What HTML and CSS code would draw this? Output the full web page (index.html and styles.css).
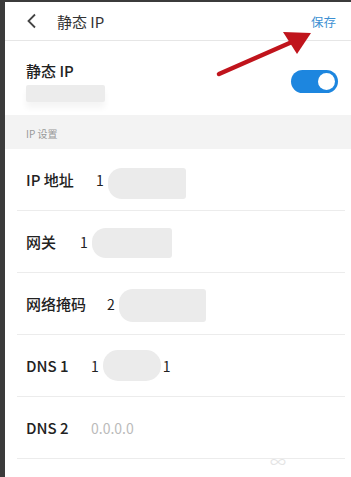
FILE: index.html
```html
<!DOCTYPE html>
<html lang="zh">
<head>
<meta charset="utf-8">
<link rel="stylesheet" href="styles.css">
</head>
<body>
<div class="screen">
  <header class="topbar">
    <svg class="back" width="12" height="16" viewBox="0 0 12 16"><path d="M9 1.5 L2.5 8 L9 14.5" fill="none" stroke="#444" stroke-width="1.8"/></svg>
    <span class="title">静态 IP</span>
    <span class="save">保存</span>
  </header>
  <section class="static-row">
    <div class="static-text">
      <div class="label">静态 IP</div>
      <div class="blur-sub"></div>
    </div>
    <div class="toggle"><div class="knob"></div></div>
  </section>
  <div class="section-head">IP 设置</div>
  <div class="row">
    <span class="label w-ip">IP 地址</span>
    <span class="value">1</span><span class="blob b-ip"></span>
  </div>
  <div class="row">
    <span class="label w-gw">网关</span>
    <span class="value">1</span><span class="blob b-gw"></span>
  </div>
  <div class="row">
    <span class="label w-mask">网络掩码</span>
    <span class="value">2</span><span class="blob b-mask"></span>
  </div>
  <div class="row">
    <span class="label w-dns">DNS 1</span>
    <span class="value">1</span><span class="blob b-dns"></span><span class="value">1</span>
  </div>
  <div class="row">
    <span class="label w-dns">DNS 2</span>
    <span class="value placeholder">0.0.0.0</span>
  </div>
  <div class="mark">∞</div>
  <svg class="arrow" width="120" height="70" viewBox="0 0 120 70">
    <path d="M6 50 L88 14" stroke="#c0141c" stroke-width="4.5" stroke-linecap="round"/>
    <path d="M70 8 L98 9 L84 30 Z" fill="#c0141c"/>
  </svg>
</div>
</body>
</html>
```
FILE: styles.css
```css
html, body { margin: 0; padding: 0; background: #3b3b3b; }
.screen {
  position: relative;
  width: 346px;
  height: 475px;
  margin-left: 5px;
  margin-top: 2px;
  background: #fff;
  font-family: "Noto Sans CJK SC", "Noto Sans", sans-serif;
  color: #222;
  overflow: hidden;
}
.topbar {
  height: 38px;
  border-bottom: 1px solid #e6e6e6;
  display: flex;
  align-items: center;
  padding-left: 21px;
  padding-right: 15px;
}
.back { margin-right: 19px; }
.title { font-size: 15px; color: #333; flex: 1; }
.save { font-size: 12.5px; color: #3b8fd2; }
.static-row {
  height: 74px;
  display: flex;
  align-items: center;
  padding-left: 21px;
  padding-right: 13px;
  box-sizing: border-box;
}
.static-text { flex: 1; padding-top: 6px; }
.label { font-size: 15px; font-weight: 500; color: #222; }
.blur-sub {
  width: 79px;
  height: 17px;
  margin-top: 4px;
  background: #ececec;
  border-radius: 2px;
  box-shadow: 0 6px 6px #f5f5f5;
}
.toggle {
  width: 47px;
  height: 23px;
  border-radius: 12px;
  background: #1d86df;
  display: flex;
  align-items: center;
  justify-content: flex-end;
  padding-right: 3px;
  box-sizing: border-box;
  margin-top: 6px;
}
.knob { width: 17px; height: 17px; border-radius: 50%; background: #fff; }
.section-head {
  height: 34px;
  background: #f3f3f3;
  font-size: 10px;
  color: #999;
  display: flex;
  align-items: center;
  padding-left: 21px;
  padding-top: 2px;
  box-sizing: border-box;
}
.row {
  height: 61px;
  margin: 0 6px 0 12px;
  border-bottom: 1px solid #ececec;
  display: flex;
  align-items: center;
  padding-left: 9px;
}
.w-ip { width: 70px; }
.w-gw { width: 54px; }
.w-mask { width: 81px; }
.w-dns { width: 65px; }
.value { font-size: 14px; color: #222; }
.placeholder { color: #bbb; }
.blob {
  display: block;
  background: #ebebeb;
  border-radius: 14px 3px 3px 14px;
  margin-left: 4px;
}
.b-ip { width: 78px; height: 31px; margin-top: 8px; }
.b-gw { width: 80px; height: 30px; margin-top: 2px; }
.b-mask { width: 87px; height: 33px; margin-top: 4px; }
.b-dns { width: 58px; height: 31px; border-radius: 15px; margin-right: 2px; }
.mark {
  position: absolute;
  left: 265px;
  top: 450px;
  font-size: 16px;
  line-height: 18px;
  color: #e4e4e4;
}
.arrow {
  position: absolute;
  left: 208px;
  top: 22px;
}
```
